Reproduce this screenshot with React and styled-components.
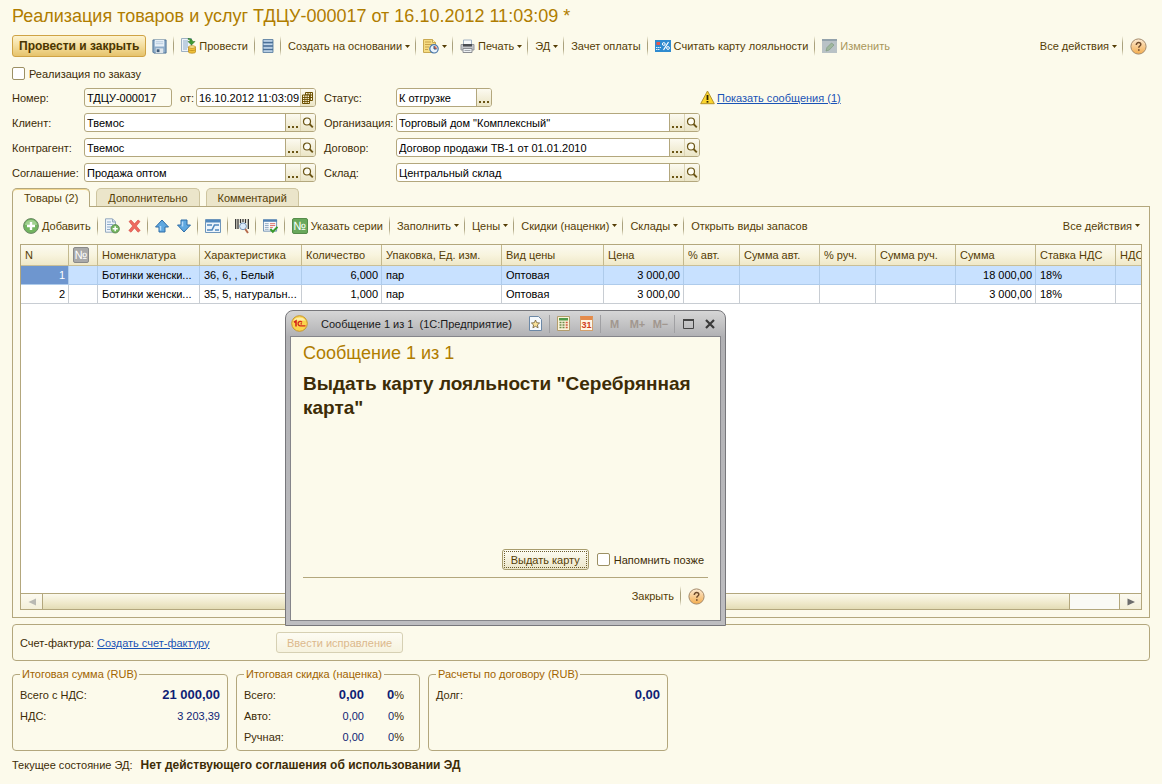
import React, { useState } from 'react';
import styled, { createGlobalStyle } from 'styled-components';

const GlobalStyle = createGlobalStyle`
    * {
        box-sizing: border-box;
    }
    body {
        margin: 0;
        background: #fcfaeb;
        color: #3d2c06;
        font-family: "Liberation Sans", Arial, sans-serif;
        font-size: 11px;
        line-height: 14px;
    }
    button, input {
        font: inherit;
        color: inherit;
    }
    svg {
        display: block;
        flex: none;
    }
`

const Page = styled.div`
    position: relative;
    display: flex;
    flex-direction: column;
    min-height: 100vh;
    padding: 0 12px 11px;
`
const Title = styled.h1`
    margin: 0;
    font-size: 18px;
    font-weight: normal;
    line-height: 32px;
    color: #b07d00;
    white-space: nowrap;
`
const Toolbar = styled.div`
    display: flex;
    align-items: center;
    height: ${props => props.$height || 22}px;
    margin-top: ${props => props.$top || 0}px;
    padding-right: 3px;
    white-space: nowrap;
`
const Separator = styled.span`
    flex: none;
    width: 1px;
    height: 20px;
    margin: 0 7px 0 6px;
    background: linear-gradient(#fcfaeb, #aaa17c 35%, #aaa17c 65%, #fcfaeb);
`
const Spacer = styled.span`
    flex: 1;
`
const ToolButton = styled.button`
    display: flex;
    align-items: center;
    gap: 3px;
    height: 20px;
    padding: 0;
    margin-left: ${props => props.$left || 0}px;
    margin-right: ${props => props.$menu ? -1 : 0}px;
    border: none;
    background: none;
    color: #553d05;
    &:disabled {
        color: #a8965a;
    }
`
const PrimaryButton = styled.button`
    height: 22px;
    padding: 0 6px;
    margin-right: 6px;
    border: 1px solid #cfa345;
    border-radius: 3px;
    background: linear-gradient(#fdf3cf, #f3dd9d 50%, #e6c36c);
    font-size: 12px;
    font-weight: bold;
    color: #4a3500;
`
const CheckLabel = styled.label`
    display: flex;
    align-items: center;
    gap: 4px;
    height: 13px;
    margin-top: ${props => props.$top || 0}px;
    white-space: nowrap;
`
const CheckBox = styled.input`
    appearance: none;
    width: 13px;
    height: 13px;
    margin: 0;
    border: 1px solid #9c9064;
    border-radius: 2px;
    background: #fff;
    &:checked {
        background: #6e96cf;
    }
`
const FormGrid = styled.div`
    display: grid;
    grid-template-columns: 72px 232px 80px 304px 1fr;
    grid-auto-rows: 19px;
    row-gap: 6px;
    align-items: center;
    margin-top: 8px;
    white-space: nowrap;
`
const Label = styled.label`
    padding-left: ${props => props.$left || 0}px;
`
const Pair = styled.div`
    display: flex;
    align-items: center;
    justify-content: space-between;
`
const FieldBox = styled.div`
    display: flex;
    width: ${props => props.$width ? props.$width + 'px' : '100%'};
    height: 19px;
    border: 1px solid #b3a77d;
    border-radius: 3px;
    background: ${props => props.$plain ? '#fdfcf0' : '#fff'};
    overflow: hidden;
`
const FieldInput = styled.input`
    flex: 1;
    min-width: 0;
    padding: 0 0 0 2px;
    border: none;
    outline: none;
    background: transparent;
    color: #000;
`
const FieldButton = styled.button`
    display: flex;
    align-items: center;
    justify-content: center;
    flex: none;
    width: 15px;
    padding: 0;
    border: none;
    border-left: 1px solid ${props => props.$soft ? '#ddd5b4' : '#b3a77d'};
    background: linear-gradient(#fcfaf0, #ebe5c6);
`
const Link = styled.a`
    color: #1a53b5;
    text-decoration: underline;
`
const Notice = styled.div`
    display: flex;
    align-items: center;
    gap: 2px;
`
const Tabs = styled.div`
    display: flex;
    gap: 6px;
    margin-top: 6px;
`
const Tab = styled.button`
    position: relative;
    height: ${props => props.$active ? 19 : 18}px;
    margin-bottom: ${props => props.$active ? -1 : 0}px;
    padding: 0 11px;
    border: 1px solid ${props => props.$active ? '#b3a77d' : '#cdc49f'};
    border-bottom: none;
    border-radius: 5px 5px 0 0;
    background: ${props => props.$active ? '#fcfaeb' : '#ebe5ca'};
    box-shadow: ${props => props.$active ? 'inset 0 1px 0 #f3d78f' : 'none'};
    color: #553d05;
`
const TabPanel = styled.div`
    display: flex;
    flex-direction: column;
    flex: 1;
    padding: 0 7px 7px;
    border: 1px solid #b3a77d;
`
const GridBox = styled.div`
    display: flex;
    flex-direction: column;
    flex: 1;
    border: 1px solid #b3a77d;
    background: #fff;
    overflow: hidden;
`
const TableArea = styled.div`
    flex: 1;
    min-height: 60px;
    overflow: hidden;
`
const Table = styled.table`
    table-layout: fixed;
    width: 1175px;
    border-spacing: 0;
    color: #000;
`
const HeadCell = styled.th`
    height: 21px;
    padding: 0 3px 0 4px;
    border-right: 1px solid #c3b98f;
    border-bottom: 1px solid #c9bf97;
    background: linear-gradient(#fbfaf0, #f8f4de 50%, #efe8c8);
    color: #553d05;
    font-weight: normal;
    text-align: left;
    white-space: nowrap;
    overflow: hidden;
`
const Cell = styled.td`
    height: 19px;
    padding: 0 3px 0 4px;
    border-right: 1px solid ${props => props.$selected ? '#aecbeb' : '#c8cdd3'};
    border-bottom: 1px solid ${props => props.$selected ? '#aecbeb' : '#c8cdd3'};
    background: ${props => props.$current ? '#6e96cf' : props.$selected ? '#c8e1ff' : '#fff'};
    color: ${props => props.$current ? '#fff' : '#000'};
    text-align: ${props => props.$right ? 'right' : 'left'};
    white-space: nowrap;
    overflow: hidden;
`
const ScrollBar = styled.div`
    display: flex;
    height: 16px;
    border-top: 1px solid #b3a77d;
    background: #fafaf5;
`
const ScrollButton = styled.button`
    display: flex;
    align-items: center;
    justify-content: center;
    width: 21px;
    padding: 0;
    border: none;
    background: linear-gradient(#fcfaf0, #f3efda);
`
const ScrollThumb = styled.div`
    flex: 1;
    border-left: 1px solid #b3a77d;
    border-right: 1px solid #b3a77d;
    background: linear-gradient(#fbf9ec, #efe9cb 60%, #e3dcb5);
`
const ScrollRest = styled.div`
    width: 50px;
    border-right: 1px solid #b3a77d;
`
const InvoicePanel = styled.div`
    display: flex;
    align-items: center;
    height: 37px;
    margin-top: 6px;
    padding: 0 7px;
    border: 1px solid #b3a77d;
    border-radius: 4px;
    white-space: nowrap;
`
const InvoiceText = styled.div`
    width: 256px;
`
const PlainButton = styled.button`
    height: 21px;
    padding: 0 ${props => props.$pad || 8}px;
    border: 1px solid #a89c6d;
    border-radius: 3px;
    background: linear-gradient(#fdfcf3, #ece6c9);
    outline: ${props => props.$focused ? '1px dotted #6b5c2d' : 'none'};
    outline-offset: -3px;
    color: #553d05;
    white-space: nowrap;
    &:disabled {
        border-color: #d6d0b3;
        background: linear-gradient(#fdfcf3, #f6f2de);
        color: #dcb98c;
    }
`
const Groups = styled.div`
    display: flex;
    gap: 8px;
    margin-top: 6px;
`
const Group = styled.fieldset`
    width: ${props => props.$width}px;
    height: 84px;
    margin: 0;
    padding: 3px 7px 0;
    border: 1px solid #b3a77d;
    border-radius: 4px;
`
const Legend = styled.legend`
    padding: 0 2px;
    color: #a06400;
    white-space: nowrap;
`
const Total = styled.div`
    display: grid;
    grid-template-columns: 1fr auto ${props => props.$percent ? '40px' : ''};
    align-items: center;
    height: 21px;
    padding-right: ${props => props.$percent ? 8 : 0}px;
    text-align: right;
    color: #0f1f75;
    & > span:first-child {
        text-align: left;
        color: #3d2c06;
    }
`
const Sum = styled.span`
    font-size: ${props => props.$bold ? 13 : 11}px;
    font-weight: ${props => props.$bold ? 'bold' : 'normal'};
`
const Percent = styled.span`
    color: #3d2c06;
`
const PercentValue = styled(Sum)`
    color: #0f1f75;
`
const Status = styled.div`
    margin-top: 6px;
    line-height: 16px;
    white-space: nowrap;
`
const StatusValue = styled.b`
    margin-left: 8px;
    font-size: 12px;
`
const Dialog = styled.div`
    position: absolute;
    left: 285px;
    top: 310px;
    width: 441px;
    height: 316px;
    display: flex;
    flex-direction: column;
    padding: 0 4px 4px;
    border: 1px solid #77777b;
    border-radius: 8px 8px 0 0;
    background: linear-gradient(#d6d6d6, #b0b0b3 26px, #bdbdc0);
`
const DialogBar = styled.div`
    display: flex;
    align-items: center;
    height: 25px;
    padding-left: 1px;
    color: #1a1a1a;
    white-space: nowrap;
`
const DialogName = styled.span`
    flex: 1;
    padding-left: 13px;
`
const BarButton = styled.button`
    display: flex;
    align-items: center;
    justify-content: center;
    width: ${props => props.$frame ? 22 : 23}px;
    height: 18px;
    padding: 0;
    border: none;
    background: none;
    color: #a1978f;
    font-weight: bold;
`
const BarLine = styled.span`
    width: 1px;
    height: 18px;
    margin: 0 2px;
    background: #a0a0a3;
`
const DialogBody = styled.div`
    flex: 1;
    display: flex;
    flex-direction: column;
    padding: 5px 12px 14px;
    border: 1px solid #85858a;
    background: #fcfaeb;
`
const DialogTitle = styled.h2`
    margin: 0;
    font-size: 18px;
    font-weight: normal;
    line-height: 22px;
    color: #b07d00;
`
const Message = styled.p`
    flex: 1;
    margin: 8px 0 0;
    font-size: 19px;
    font-weight: bold;
    line-height: 24px;
`
const DialogActions = styled.div`
    display: flex;
    align-items: center;
    justify-content: flex-end;
    gap: 8px;
    padding: 0 4px 7px 0;
    border-bottom: 1px solid #b3a77d;
`
const DialogFooter = styled.div`
    display: flex;
    align-items: center;
    justify-content: flex-end;
    height: 20px;
    margin-top: 8px;
    padding-right: 3px;
`

const Arrow = () => (
    <svg width="5" height="3" viewBox="0 0 5 3"><path d="M0 0h5L2.500 3z" fill="#553d05" /></svg>
)
const SaveIcon = () => (
    <svg width="15" height="15" viewBox="0 0 16 16">
        <path d="M1 1h14v14H2l-1-1z" fill="#8fadc9" stroke="#4a6e93" />
        <path d="M3 1h10v7H3z" fill="#e9f1f8" />
        <path d="M4 3h8M4 5h8" stroke="#b5cadd" />
        <path d="M4 10h8v5H4z" fill="#dfe6ec" />
        <path d="M5 11h3v3H5z" fill="#3e5b79" />
    </svg>
)
const PostIcon = () => (
    <svg width="15" height="16" viewBox="0 0 15 16">
        <path d="M.5.5h10v13h-10z" fill="#eef3f8" stroke="#9eb1c4" />
        <path d="M2 3h5M2 5h5M2 7h5M2 9h5M2 11h4" stroke="#8eaccb" />
        <path d="M7 .5c3 0 4.500 1 4.500 3H14L10.500 7 7 3.500h2.200C9 2 8.500 1.500 7 1.300z" fill="#3d9a34" stroke="#226b1c" strokeWidth=".5" />
        <path d="M7.500 9v5c0 1.600 7 1.600 7 0V9z" fill="#efc13b" stroke="#b98512" strokeWidth=".7" />
        <ellipse cx="11" cy="9" rx="3.500" ry="1.300" fill="#fbe795" stroke="#b98512" strokeWidth=".7" />
        <path d="M7.500 11.500c0 1.400 7 1.400 7 0" fill="none" stroke="#b98512" strokeWidth=".7" />
    </svg>
)
const RegisterIcon = () => (
    <svg width="12" height="16" viewBox="0 0 12 16">
        <path d="M1 1.500h10v13H1z" fill="#a9c3dc" stroke="#6c8caa" />
        <path d="M1 4.500h10M1 8h10M1 11.500h10" stroke="#4a6f96" strokeWidth="1.300" />
        <path d="M2 3h8M2 6.500h8M2 10h8M2 13h8" stroke="#cbdced" strokeWidth=".8" />
    </svg>
)
const ReportIcon = () => (
    <svg width="16" height="16" viewBox="0 0 16 16">
        <path d="M.5 1.500h9l3 3v10H.5z" fill="#f6dc83" stroke="#c9a950" />
        <path d="M9.500 1.500v3h3" fill="#fdf3c6" stroke="#c9a950" />
        <path d="M2 4h6M2 6.500h7M2 9h4M2 11.500h3" stroke="#c9a24a" />
        <circle cx="11" cy="10.800" r="4.200" fill="#eaf3fc" stroke="#4a78ab" strokeWidth="1.200" />
        <path d="M11 11V8a3 3 0 0 1 2.800 3z" fill="#e36b4c" />
        <path d="M11 8v3h2.500" fill="none" stroke="#33547c" />
    </svg>
)
const PrintIcon = () => (
    <svg width="15" height="16" viewBox="0 0 15 16">
        <path d="M3.500 2h8v5h-8z" fill="#f7f9fb" stroke="#a3b2c2" />
        <path d="M1 6.500h13v5.500H1z" fill="#c4c6ca" stroke="#94969b" />
        <path d="M3 6h9v2.500H3z" fill="#4a4d52" />
        <path d="M3 10.500h9v4H3z" fill="#eef1f4" stroke="#8a8c91" />
        <path d="M4.500 12.500h6" stroke="#a3a7ad" />
    </svg>
)
const CardIcon = () => (
    <svg width="16" height="12" viewBox="0 0 16 12">
        <path d="M0 0h16v12H0z" fill="#2f8bd0" />
        <path d="M1.500 2h3.500v3H1.500z" fill="#e4574e" />
        <path d="M1 7.500h1.500M3 7.500h1.500M5 7.500h1M1 9.500h1.500M3 9.500h1.500" stroke="#dff0fc" />
        <path d="M13.500 2L8.500 10" stroke="#fff" strokeWidth="1.200" />
        <circle cx="8.800" cy="4" r="1.400" fill="none" stroke="#fff" />
        <circle cx="13" cy="8" r="1.400" fill="none" stroke="#fff" />
    </svg>
)
const EditIcon = () => (
    <svg width="15" height="14" viewBox="0 0 15 14">
        <path d="M0 0h15v14H0z" fill="#b9c2c6" />
        <path d="M0 0h15v2H0z" fill="#93a2ab" />
        <path d="M4 12l1-3.500L9.500 4l2.500 2-4.800 5z" fill="#9fb79d" stroke="#7f9b80" strokeWidth=".7" />
    </svg>
)
const HelpIcon = () => (
    <svg width="17" height="17" viewBox="0 0 17 17">
        <defs>
            <linearGradient id="help" x1="0" y1="0" x2="0" y2="1">
                <stop offset="0" stopColor="#fdebd3" />
                <stop offset="1" stopColor="#f3ac4d" />
            </linearGradient>
        </defs>
        <circle cx="8.500" cy="8.500" r="7.600" fill="url(#help)" stroke="#a58a6b" />
        <path d="M6.300 6.900c0-1.500 1-2.300 2.300-2.300s2.200.8 2.200 1.900c0 1.500-2 1.600-2 3.200" fill="none" stroke="#6e4a2b" strokeWidth="1.500" />
        <path d="M8 11.200h1.600v1.600H8z" fill="#6e4a2b" />
    </svg>
)
const WarningIcon = () => (
    <svg width="15" height="15" viewBox="0 0 15 15">
        <path d="M7.500 1L14.300 13.700H.7z" fill="#fbd52e" stroke="#b3922a" strokeLinejoin="round" />
        <path d="M7.500 5v5" stroke="#2b2200" strokeWidth="1.800" />
        <path d="M6.600 11h1.800v1.600H6.600z" fill="#2b2200" />
    </svg>
)
const SearchIcon = () => (
    <svg width="12" height="12" viewBox="0 0 12 12">
        <circle cx="5" cy="4.500" r="3.500" fill="#fdfcf3" stroke="#6b5515" strokeWidth="1.200" />
        <path d="M7.500 7l3.300 3.300" stroke="#6b5515" strokeWidth="1.900" />
    </svg>
)
const DotsIcon = () => (
    <svg width="10" height="10" viewBox="0 0 10 10">
        <path d="M0 8h2v2H0zM4 8h2v2H4zM8 8h2v2H8z" fill="#6b5515" />
    </svg>
)
const CalendarIcon = () => (
    <svg width="11" height="12" viewBox="0 0 11 12">
        <path d="M3.500.5h7v8h-7z" fill="#fdf6d8" stroke="#6b4f00" />
        <path d="M3.500 3h7M3.500 5.500h7M6 .5v8M8.300.5v8" stroke="#6b4f00" />
        <path d="M.5 3h7v8.500h-7z" fill="#fdf6d8" stroke="#6b4f00" />
        <path d="M.5 5.500h7M.5 7.500h7M.5 9.500h7M2.800 3v8.500M5.200 3v8.500" stroke="#6b4f00" strokeWidth=".9" />
    </svg>
)
const AddIcon = () => (
    <svg width="16" height="16" viewBox="0 0 16 16">
        <circle cx="8" cy="8" r="7.400" fill="#72b55f" stroke="#6c8766" />
        <path d="M2 7a6 5 0 0 1 12 0z" fill="#a0d08f" />
        <path d="M8 4v8M4 8h8" stroke="#fff" strokeWidth="2.400" />
    </svg>
)
const CopyIcon = () => (
    <svg width="15" height="16" viewBox="0 0 15 16">
        <path d="M.5.800h7l3 3v10.400H.5z" fill="#eef4fa" stroke="#94a9be" />
        <path d="M7.500 1v3h3" fill="#cddceb" stroke="#94a9be" />
        <path d="M2 4h4M2 6.500h6M2 9h4M2 11.500h3" stroke="#8eaccb" />
        <circle cx="10.200" cy="10.800" r="4.200" fill="#72b55f" stroke="#57804d" strokeWidth=".8" />
        <path d="M10.200 8.300v5M7.700 10.800h5" stroke="#fff" strokeWidth="1.500" />
    </svg>
)
const DeleteIcon = () => (
    <svg width="13" height="14" viewBox="0 0 13 14">
        <path d="M1 2.500L3 1l3.500 3.800L10 1l2 1.500L8.300 7l3.900 4.500-2.200 1.700-3.500-4.100L3 13.200.8 11.500 4.700 7z" fill="#ee6a5e" stroke="#d04a42" strokeWidth=".6" />
    </svg>
)
const MoveIcon = ({ down }) => (
    <svg width="14" height="14" viewBox="0 0 14 14">
        <path d={down ? 'M4 1h6v5h3.500L7 13 .5 6H4z' : 'M4 13h6V8h3.500L7 1 .5 8H4z'} fill="#5fa8e0" stroke="#2f6ca6" strokeLinejoin="round" />
        <path d={down ? 'M5.500 2.500v5' : 'M5.500 7v4.500'} stroke="#b4dafa" strokeWidth="1.500" />
    </svg>
)
const PictureIcon = () => (
    <svg width="16" height="14" viewBox="0 0 16 14">
        <path d="M.5.5h15v13H.5z" fill="#eef5fb" stroke="#6d95bb" />
        <path d="M1 1h14v2.500H1z" fill="#4f87bd" />
        <path d="M2 6h5M2 11h5l2.500-5H14M10 11h4" fill="none" stroke="#4f87bd" strokeWidth="1.600" />
    </svg>
)
const BarcodeIcon = () => (
    <svg width="14" height="16" viewBox="0 0 14 16">
        <path d="M.7 1v10M3 1v10M5.500 1v4M8 1v3M10.500 1v4M13.300 1v10" stroke="#333" strokeWidth="1.300" />
        <circle cx="8" cy="8.300" r="3.400" fill="#dcebfa" stroke="#7796bb" />
        <path d="M10.200 11l2.800 4" stroke="#b5694b" strokeWidth="2" />
    </svg>
)
const CheckListIcon = () => (
    <svg width="15" height="16" viewBox="0 0 16 16">
        <path d="M.5 1.500h14v12H.5z" fill="#f6f9fc" stroke="#6d8fb3" />
        <path d="M0 1h15v2.500H0z" fill="#4f80b3" />
        <path d="M2 5.500h4M2 7.500h4M2 9.500h4M2 11.500h4" stroke="#8da6c0" />
        <path d="M7.500 5.500h5.500M7.500 7.500h5.500M7.500 9.500h3" stroke="#dd6a60" />
        <path d="M7.800 11.200l2.700 3 5-5.300" fill="none" stroke="#3a9a2c" strokeWidth="2.200" />
    </svg>
)
const SeriesBadge = styled.span`
    display: inline-flex;
    align-items: center;
    justify-content: center;
    width: 16px;
    height: 16px;
    border: 1px solid ${props => props.$gray ? '#8a8a8a' : '#568c4a'};
    border-radius: 2px;
    background: ${props => props.$gray ? '#a9a9a9' : '#69a85b'};
    color: #fff;
    font-size: 12px;
    vertical-align: middle;
`
const TriangleIcon = ({ left }) => (
    <svg width="8" height="8" viewBox="0 0 8 8">
        <path d={left ? 'M8 .5v7L.5 4z' : 'M.5.5v7L8 4z'} fill={left ? '#b9b9b3' : '#6c6c6c'} />
    </svg>
)
const LogoIcon = () => (
    <svg width="17" height="17" viewBox="0 0 17 17">
        <circle cx="8.500" cy="8.500" r="7.800" fill="#fbd44c" stroke="#c7962e" />
        <path d="M2.500 5.500a6.500 5 0 0 1 12 0z" fill="#fdeea8" />
        <path d="M3 7.200L5 6v5.500" fill="none" stroke="#d3261c" strokeWidth="1.600" />
        <path d="M11 7.300A2.200 2.200 0 1 0 9.500 10.800h5M9.500 8.800h1.500" fill="none" stroke="#d3261c" strokeWidth="1.300" />
    </svg>
)
const FavoriteIcon = () => (
    <svg width="13" height="15" viewBox="0 0 13 15">
        <path d="M.5.5h9l3 3v11H.5z" fill="#f5f9fd" stroke="#6c88a6" />
        <path d="M6.500 4l1.200 2.700 2.900.3-2.200 1.900.7 2.900-2.600-1.500-2.600 1.500.7-2.900L2.400 7l2.900-.3z" fill="#fbe39a" stroke="#6d5a35" strokeWidth=".8" />
    </svg>
)
const CalcIcon = () => (
    <svg width="13" height="15" viewBox="0 0 13 15">
        <path d="M.5.5h12v14H.5z" fill="#fbf3d8" stroke="#b39d6c" />
        <path d="M2 2h9v2.500H2z" fill="#4f9a4a" />
        <path d="M2.500 6.500h2M5.500 6.500h2M2.500 9h2M5.500 9h2M2.500 11.500h2M5.500 11.500h2" stroke="#6d8a4a" strokeWidth="1.300" />
        <path d="M8.700 6.500h2M8.700 9h2M8.700 11.500h2" stroke="#cc5a3f" strokeWidth="1.300" />
    </svg>
)
const DayIcon = styled.span`
    width: 13px;
    height: 15px;
    border: 1px solid #d3a06c;
    border-top: 4px solid #e58b4b;
    background: #fff6e4;
    color: #d1401f;
    font-size: 9px;
    line-height: 10px;
`
const MaximizeIcon = () => (
    <svg width="11" height="10" viewBox="0 0 11 10">
        <path d="M.5.5h10v9H.5z" fill="none" stroke="#444" />
        <path d="M0 1h11" stroke="#444" strokeWidth="2" />
    </svg>
)
const CloseIcon = () => (
    <svg width="10" height="10" viewBox="0 0 10 10"><path d="M1 1l8 8M9 1L1 9" stroke="#3a3a3a" strokeWidth="2.200" /></svg>
)

const columns = [
    { title: 'N', width: 48 },
    { title: '№', width: 29 },
    { title: 'Номенклатура', width: 102 },
    { title: 'Характеристика', width: 102 },
    { title: 'Количество', width: 80 },
    { title: 'Упаковка, Ед. изм.', width: 120 },
    { title: 'Вид цены', width: 102 },
    { title: 'Цена', width: 80 },
    { title: '% авт.', width: 56 },
    { title: 'Сумма авт.', width: 80 },
    { title: '% руч.', width: 56 },
    { title: 'Сумма руч.', width: 80 },
    { title: 'Сумма', width: 80 },
    { title: 'Ставка НДС', width: 80 },
    { title: 'НДС', width: 80 },
]
const numeric = [0, 4, 7, 12]
const rows = [
    ['1', '', 'Ботинки женски...', '36, 6, , Белый', '6,000', 'пар', 'Оптовая', '3 000,00', '', '', '', '', '18 000,00', '18%', ''],
    ['2', '', 'Ботинки женски...', '35, 5, натуральн...', '1,000', 'пар', 'Оптовая', '3 000,00', '', '', '', '', '3 000,00', '18%', ''],
]

const Field = ({ id, value, width, plain, dots, search, calendar }) => (
    <FieldBox $width={width} $plain={plain}>
        <FieldInput id={id} type="text" defaultValue={value} />
        {dots && <FieldButton type="button" aria-label="Выбрать"><DotsIcon /></FieldButton>}
        {search && <FieldButton type="button" aria-label="Открыть" $soft><SearchIcon /></FieldButton>}
        {calendar && <FieldButton type="button" aria-label="Календарь" $soft><CalendarIcon /></FieldButton>}
    </FieldBox>
)

const MainToolbar = () => (
    <Toolbar $top={3}>
        <PrimaryButton type="button">Провести и закрыть</PrimaryButton>
        <ToolButton type="button" aria-label="Записать"><SaveIcon /></ToolButton>
        <Separator />
        <ToolButton type="button"><PostIcon />Провести</ToolButton>
        <Separator />
        <ToolButton type="button" aria-label="Движения"><RegisterIcon /></ToolButton>
        <Separator />
        <ToolButton type="button" $menu>Создать на основании<Arrow /></ToolButton>
        <Separator />
        <ToolButton type="button" aria-label="Отчеты" $menu><ReportIcon /><Arrow /></ToolButton>
        <Separator />
        <ToolButton type="button" $menu><PrintIcon />Печать<Arrow /></ToolButton>
        <Separator />
        <ToolButton type="button" $menu>ЭД<Arrow /></ToolButton>
        <Separator />
        <ToolButton type="button">Зачет оплаты</ToolButton>
        <Separator />
        <ToolButton type="button"><CardIcon />Считать карту лояльности</ToolButton>
        <Separator />
        <ToolButton type="button" disabled><EditIcon />Изменить</ToolButton>
        <Spacer />
        <ToolButton type="button" $menu>Все действия<Arrow /></ToolButton>
        <Separator />
        <ToolButton type="button" aria-label="Справка"><HelpIcon /></ToolButton>
    </Toolbar>
)

const GoodsToolbar = () => (
    <Toolbar $height={37}>
        <ToolButton type="button" $left={3}><AddIcon />Добавить</ToolButton>
        <Separator />
        <ToolButton type="button" aria-label="Скопировать"><CopyIcon /></ToolButton>
        <ToolButton type="button" aria-label="Удалить" $left={8}><DeleteIcon /></ToolButton>
        <Separator />
        <ToolButton type="button" aria-label="Вверх"><MoveIcon /></ToolButton>
        <ToolButton type="button" aria-label="Вниз" $left={8}><MoveIcon down /></ToolButton>
        <Separator />
        <ToolButton type="button" aria-label="Подбор"><PictureIcon /></ToolButton>
        <Separator />
        <ToolButton type="button" aria-label="Поиск по штрихкоду"><BarcodeIcon /></ToolButton>
        <Separator />
        <ToolButton type="button" aria-label="Проверить"><CheckListIcon /></ToolButton>
        <Separator />
        <ToolButton type="button"><SeriesBadge>№</SeriesBadge>Указать серии</ToolButton>
        <Separator />
        <ToolButton type="button" $menu>Заполнить<Arrow /></ToolButton>
        <Separator />
        <ToolButton type="button" $menu>Цены<Arrow /></ToolButton>
        <Separator />
        <ToolButton type="button" $menu>Скидки (наценки)<Arrow /></ToolButton>
        <Separator />
        <ToolButton type="button" $menu>Склады<Arrow /></ToolButton>
        <Separator />
        <ToolButton type="button">Открыть виды запасов</ToolButton>
        <Spacer />
        <ToolButton type="button" $menu>Все действия<Arrow /></ToolButton>
    </Toolbar>
)

const GoodsTable = () => (
    <Table>
        <colgroup>
            {columns.map(column => <col key={column.title} style={{ width: column.width }} />)}
        </colgroup>
        <thead>
            <tr>
                {columns.map((column, i) => (
                    <HeadCell key={column.title}>
                        {i === 1 ? <SeriesBadge $gray>№</SeriesBadge> : column.title}
                    </HeadCell>
                ))}
            </tr>
        </thead>
        <tbody>
            {rows.map((row, r) => (
                <tr key={r}>
                    {row.map((value, i) => (
                        <Cell key={i} $selected={r === 0} $current={r === 0 && i === 0} $right={numeric.includes(i)}>
                            {value}
                        </Cell>
                    ))}
                </tr>
            ))}
        </tbody>
    </Table>
)

const MessageDialog = () => (
    <Dialog role="dialog" aria-label="Сообщение 1 из 1">
        <DialogBar>
            <LogoIcon />
            <DialogName>Сообщение 1 из 1&nbsp; (1С:Предприятие)</DialogName>
            <BarButton type="button" aria-label="Избранное"><FavoriteIcon /></BarButton>
            <BarLine />
            <BarButton type="button" aria-label="Калькулятор"><CalcIcon /></BarButton>
            <BarButton type="button"><DayIcon>31</DayIcon></BarButton>
            <BarLine />
            <BarButton type="button">M</BarButton>
            <BarButton type="button">M+</BarButton>
            <BarButton type="button">M−</BarButton>
            <BarLine />
            <BarButton type="button" aria-label="Развернуть" $frame><MaximizeIcon /></BarButton>
            <BarButton type="button" aria-label="Закрыть окно" $frame><CloseIcon /></BarButton>
        </DialogBar>
        <DialogBody>
            <DialogTitle>Сообщение 1 из 1</DialogTitle>
            <Message>Выдать карту лояльности "Серебрянная карта"</Message>
            <DialogActions>
                <PlainButton type="button" $focused>Выдать карту</PlainButton>
                <CheckLabel htmlFor="later"><CheckBox id="later" type="checkbox" />Напомнить позже</CheckLabel>
            </DialogActions>
            <DialogFooter>
                <ToolButton type="button">Закрыть</ToolButton>
                <Separator />
                <ToolButton type="button" aria-label="Справка"><HelpIcon /></ToolButton>
            </DialogFooter>
        </DialogBody>
    </Dialog>
)

export default function App() {
    const [tab, setTab] = useState('Товары (2)');

    return (
        <Page>
            <GlobalStyle />
            <Title>Реализация товаров и услуг ТДЦУ-000017 от 16.10.2012 11:03:09 *</Title>
            <MainToolbar />
            <CheckLabel htmlFor="by-order" $top={10}>
                <CheckBox id="by-order" type="checkbox" />Реализация по заказу
            </CheckLabel>
            <FormGrid>
                <Label htmlFor="number">Номер:</Label>
                <Pair>
                    <Field id="number" value="ТДЦУ-000017" width={88} plain />
                    <Label htmlFor="date" $left={6}>от:</Label>
                    <Field id="date" value="16.10.2012 11:03:09" width={120} calendar />
                </Pair>
                <Label htmlFor="status" $left={8}>Статус:</Label>
                <Field id="status" value="К отгрузке" width={96} dots />
                <Notice>
                    <WarningIcon />
                    <Link href="#messages">Показать сообщения (1)</Link>
                </Notice>

                <Label htmlFor="client">Клиент:</Label>
                <Field id="client" value="Твемос" dots search />
                <Label htmlFor="company" $left={8}>Организация:</Label>
                <Field id="company" value={'Торговый дом "Комплексный"'} dots search />
                <span />

                <Label htmlFor="partner">Контрагент:</Label>
                <Field id="partner" value="Твемос" dots search />
                <Label htmlFor="contract" $left={8}>Договор:</Label>
                <Field id="contract" value="Договор продажи ТВ-1 от 01.01.2010" dots search />
                <span />

                <Label htmlFor="agreement">Соглашение:</Label>
                <Field id="agreement" value="Продажа оптом" dots search />
                <Label htmlFor="store" $left={8}>Склад:</Label>
                <Field id="store" value="Центральный склад" dots search />
            </FormGrid>
            <Tabs role="tablist">
                {['Товары (2)', 'Дополнительно', 'Комментарий'].map(name => (
                    <Tab key={name} type="button" role="tab" aria-selected={tab === name} $active={tab === name} onClick={() => setTab(name)}>
                        {name}
                    </Tab>
                ))}
            </Tabs>
            <TabPanel>
                <GoodsToolbar />
                <GridBox>
                    <TableArea>
                        <GoodsTable />
                    </TableArea>
                    <ScrollBar>
                        <ScrollButton type="button" aria-label="Влево"><TriangleIcon left /></ScrollButton>
                        <ScrollThumb />
                        <ScrollRest />
                        <ScrollButton type="button" aria-label="Вправо"><TriangleIcon /></ScrollButton>
                    </ScrollBar>
                </GridBox>
            </TabPanel>
            <InvoicePanel>
                <InvoiceText>Счет-фактура: <Link href="#invoice">Создать счет-фактуру</Link></InvoiceText>
                <PlainButton type="button" $pad={10} disabled>Ввести исправление</PlainButton>
            </InvoicePanel>
            <Groups>
                <Group $width={216}>
                    <Legend>Итоговая сумма (RUB)</Legend>
                    <Total><span>Всего с НДС:</span><Sum $bold>21 000,00</Sum></Total>
                    <Total><span>НДС:</span><Sum>3 203,39</Sum></Total>
                </Group>
                <Group $width={184}>
                    <Legend>Итоговая скидка (наценка)</Legend>
                    <Total $percent><span>Всего:</span><Sum $bold>0,00</Sum><Percent><PercentValue $bold>0</PercentValue>%</Percent></Total>
                    <Total $percent><span>Авто:</span><Sum>0,00</Sum><Percent><PercentValue>0</PercentValue>%</Percent></Total>
                    <Total $percent><span>Ручная:</span><Sum>0,00</Sum><Percent><PercentValue>0</PercentValue>%</Percent></Total>
                </Group>
                <Group $width={240}>
                    <Legend>Расчеты по договору (RUB)</Legend>
                    <Total><span>Долг:</span><Sum $bold>0,00</Sum></Total>
                </Group>
            </Groups>
            <Status>Текущее состояние ЭД:<StatusValue>Нет действующего соглашения об использовании ЭД</StatusValue></Status>
            <MessageDialog />
        </Page>
    );
}
